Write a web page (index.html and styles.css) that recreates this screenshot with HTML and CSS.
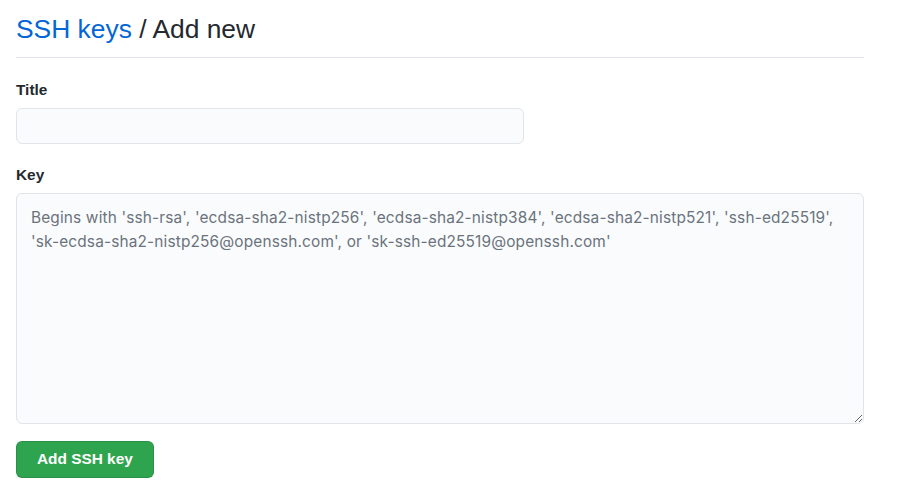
FILE: index.html
```html
<!DOCTYPE html>
<html lang="en">
<head>
<meta charset="utf-8">
<title>SSH keys / Add new</title>
<link rel="stylesheet" href="styles.css">
</head>
<body>
<main class="page">
  <div class="subhead">
    <h2 class="subhead-heading"><a class="crumb" href="#">SSH keys</a> / Add new</h2>
  </div>
  <form class="form">
    <div class="form-group">
      <label class="label" for="title">Title</label>
      <input class="form-control title-input" id="title" type="text">
    </div>
    <div class="form-group">
      <label class="label" for="key">Key</label>
      <textarea class="form-control key-input" id="key" placeholder="Begins with 'ssh-rsa', 'ecdsa-sha2-nistp256', 'ecdsa-sha2-nistp384', 'ecdsa-sha2-nistp521', 'ssh-ed25519', 'sk-ecdsa-sha2-nistp256@openssh.com', or 'sk-ssh-ed25519@openssh.com'"></textarea>
    </div>
    <button class="btn-primary" type="button">Add SSH key</button>
  </form>
</main>
</body>
</html>
```

FILE: styles.css
```css
* { box-sizing: border-box; }
html, body {
  margin: 0;
  background: #ffffff;
}
body {
  font-family: "Liberation Sans", Arial, Helvetica, sans-serif;
  color: #24292e;
}
.page {
  width: 848px;
  margin-left: 16px;
  padding-top: 10px;
}
.subhead {
  border-bottom: 1px solid #e1e4e8;
  padding-bottom: 7px;
}
.subhead-heading {
  margin: 0;
  font-size: 26.4px;
  font-weight: 400;
  line-height: 39.6px;
}
.crumb {
  color: #0366d6;
  text-decoration: none;
}
.form {
  display: flex;
  flex-direction: column;
  align-items: flex-start;
  padding-top: 21px;
}
.form-group {
  display: flex;
  flex-direction: column;
  align-items: flex-start;
  width: 100%;
  margin-bottom: 20px;
}
.form-group + .form-group { margin-bottom: 17px; }
.label {
  font-size: 15.4px;
  font-weight: 700;
  line-height: 22px;
  margin-bottom: 7px;
}
.form-control {
  font-family: Inter, "Liberation Sans", Arial, sans-serif;
  font-size: 15.4px;
  line-height: 24px;
  letter-spacing: 0.16px;
  color: #24292e;
  background: #fafbfc;
  border: 1px solid #e1e4e8;
  border-radius: 6px;
  outline: none;
}
.title-input {
  width: 508px;
  height: 36px;
  padding: 5px 13px;
}
.key-input {
  width: 848px;
  height: 231px;
  padding: 12px 14px;
  resize: vertical;
}
.key-input::placeholder {
  color: #6a737d;
  opacity: 1;
}
.btn-primary {
  font-family: "Liberation Sans", Arial, Helvetica, sans-serif;
  font-size: 15.4px;
  font-weight: 700;
  line-height: 22px;
  color: #ffffff;
  background: #2ea44f;
  border: 1px solid rgba(27, 31, 35, 0.15);
  border-radius: 6px;
  height: 37px;
  padding: 6px 20px;
  cursor: pointer;
}
```
